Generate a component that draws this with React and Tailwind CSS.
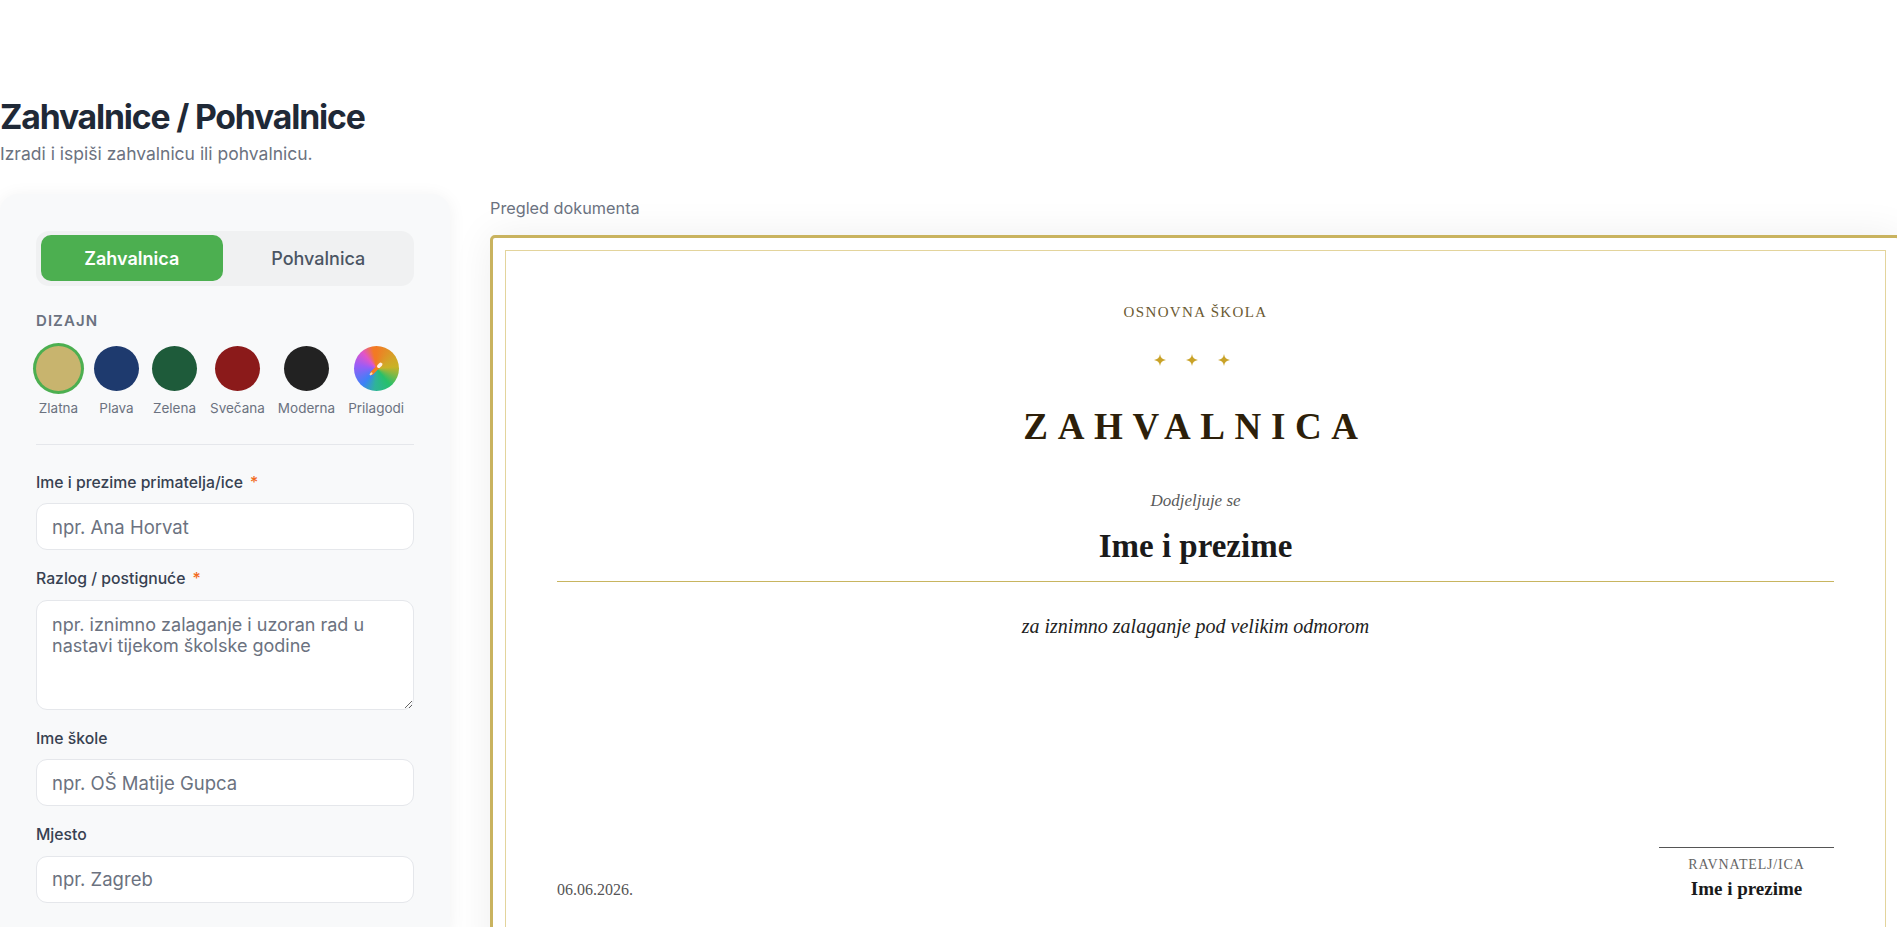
import React, { useState } from "react";

const designs = [
  { id: "zlatna", label: "Zlatna", color: "bg-[#c8b46e]" },
  { id: "plava", label: "Plava", color: "bg-[#1e3a6e]" },
  { id: "zelena", label: "Zelena", color: "bg-[#1e5b3a]" },
  { id: "svecana", label: "Svečana", color: "bg-[#8b1a1a]" },
  { id: "moderna", label: "Moderna", color: "bg-[#222222]" },
];

const Star = () => (
  <svg width="12" height="12" viewBox="0 0 12 12" className="text-[#c9a227]">
    <path
      d="M6 0 C6.5 3.6 8.4 5.5 12 6 C8.4 6.5 6.5 8.4 6 12 C5.5 8.4 3.6 6.5 0 6 C3.6 5.5 5.5 3.6 6 0 Z"
      fill="currentColor"
    />
  </svg>
);

const Field = ({ label, required, children }) => (
  <div>
    <label className="mb-[9px] block text-[15.75px] font-medium leading-[22.5px] text-[#374151]">
      {label}
      {required && <span className="ml-[7px] text-[#f26b1d]">*</span>}
    </label>
    {children}
  </div>
);

const inputCls =
  "block h-[47px] w-full rounded-[11px] border border-[#e5e7eb] bg-white px-[15px] text-[18.5px] leading-[27px] text-[#111827] placeholder:text-[#6b7280] outline-none";

const App = () => {
  const [type, setType] = useState("zahvalnica");
  const [design, setDesign] = useState("zlatna");
  const [name, setName] = useState("");
  const [reason, setReason] = useState("");

  return (
    <div className="h-screen w-full overflow-hidden bg-white font-['Inter',sans-serif]">
      <div className="pt-[97px]">
        <h1 className="text-[33.75px] font-bold leading-[40.5px] tracking-[-0.035em] text-[#1f2937]">
          Zahvalnice / Pohvalnice
        </h1>
        <p className="mt-[4px] text-[17.5px] leading-[24px] text-[#6b7280]">
          Izradi i ispiši zahvalnicu ili pohvalnicu.
        </p>

        <div className="mt-[28px] flex items-start gap-[40px]">
          {/* Form panel */}
          <aside className="w-[450px] shrink-0 rounded-[18px] bg-[#f8f9fa] px-[36px] pt-[37px] pb-[36px] shadow-[0_2px_18px_rgba(0,0,0,0.06)]">
            <div className="flex gap-[4px] rounded-[13px] bg-[#f0f1f2] p-[4.5px]">
              <button
                onClick={() => setType("zahvalnica")}
                className={`h-[46px] flex-1 rounded-[10px] text-[18px] font-semibold ${
                  type === "zahvalnica" ? "bg-[#4caf50] text-white" : "text-[#4b5563]"
                }`}
              >
                Zahvalnica
              </button>
              <button
                onClick={() => setType("pohvalnica")}
                className={`h-[46px] flex-1 rounded-[10px] text-[18px] font-medium ${
                  type === "pohvalnica" ? "bg-[#4caf50] text-white" : "text-[#4b5563]"
                }`}
              >
                Pohvalnica
              </button>
            </div>

            <div className="mt-[24px] text-[15px] font-semibold uppercase leading-[22.5px] tracking-[0.07em] text-[#6b7280]">
              Dizajn
            </div>
            <div className="mt-[13.5px] flex gap-[13px] border-b border-[#e5e7eb] pb-[27px]">
              {designs.map((d) => (
                <button key={d.id} onClick={() => setDesign(d.id)} className="flex flex-col items-center gap-[8px]">
                  <span
                    className={`block h-[45px] w-[45px] rounded-full ${d.color} ${
                      design === d.id ? "ring-[3px] ring-[#4caf50]" : ""
                    }`}
                  />
                  <span className="text-[13.5px] leading-[18px] text-[#6b7280]">{d.label}</span>
                </button>
              ))}
              <button onClick={() => setDesign("custom")} className="flex flex-col items-center gap-[8px]">
                <span className="flex h-[45px] w-[45px] items-center justify-center rounded-full bg-[conic-gradient(from_0deg,#f27a24,#d2a628_60deg,#c9b226_85deg,#27c06a_140deg,#2fb39a_185deg,#3b82f6_220deg,#9b5cf6_280deg,#e255c8_320deg,#f27a24_350deg)]">
                  <svg width="16" height="16" viewBox="0 0 16 16" className="mt-[2px]">
                    <path d="M12.5 3.5 L4 12" stroke="#f57c1f" strokeWidth="3.6" strokeLinecap="round" />
                    <path d="M12.6 3.4 L10.8 5.2" stroke="#fff3e6" strokeWidth="3.6" strokeLinecap="round" />
                    <path d="M3.6 12.4 L2.6 13.4" stroke="#ffd9b0" strokeWidth="2" strokeLinecap="round" />
                  </svg>
                </span>
                <span className="text-[13.5px] leading-[18px] text-[#6b7280]">Prilagodi</span>
              </button>
            </div>

            <div className="flex flex-col gap-[18px] pt-[27px]">
              <Field label="Ime i prezime primatelja/ice" required>
                <input
                  className={inputCls}
                  placeholder="npr. Ana Horvat"
                  value={name}
                  onChange={(e) => setName(e.target.value)}
                />
              </Field>
              <Field label="Razlog / postignuće" required>
                <textarea
                  className="block h-[110px] w-full rounded-[11px] border border-[#e5e7eb] bg-white px-[15px] py-[13px] text-[18px] leading-[21px] text-[#111827] placeholder:text-[#6b7280] outline-none"
                  placeholder="npr. iznimno zalaganje i uzoran rad u nastavi tijekom školske godine"
                  value={reason}
                  onChange={(e) => setReason(e.target.value)}
                />
              </Field>
              <Field label="Ime škole">
                <input className={inputCls} placeholder="npr. OŠ Matije Gupca" />
              </Field>
              <Field label="Mjesto">
                <input className={inputCls} placeholder="npr. Zagreb" />
              </Field>
            </div>
          </aside>

          {/* Preview */}
          <section className="shrink-0 pt-[3px]">
            <p className="mb-[16px] text-[16.25px] leading-[22.5px] text-[#6b7280]">Pregled dokumenta</p>
            <div className="h-[734px] w-[1411px] rounded-[5px] border-[3px] border-[#c9b35f] bg-white p-[12px] shadow-[0_0_40px_rgba(0,0,0,0.07)]">
              <div className="flex h-full flex-col items-center border border-[#e3d49c] px-[51px] pt-[51px] pb-[51px] font-['Liberation_Serif',serif]">
                <div className="text-[15px] leading-[20px] tracking-[0.09em] text-[#6b5a32]">OSNOVNA ŠKOLA</div>
                <div className="mt-[32px] mr-[8px] flex h-[12px] gap-[20px]">
                  <Star />
                  <Star />
                  <Star />
                </div>
                <h2 className="mt-[39px] text-[37px] font-bold leading-[44.4px] tracking-[0.26em] text-[#2d1f0a]">
                  {type === "zahvalnica" ? "ZAHVALNICA" : "POHVALNICA"}
                </h2>
                <div className="mt-[40px] text-[17px] italic leading-[24px] text-[#5a5a5a]">Dodjeljuje se</div>
                <div className="mt-[13px] text-[33px] font-bold leading-[40px] text-[#1a1a1a]">
                  {name || "Ime i prezime"}
                </div>
                <div className="mt-[15px] h-px w-full bg-[#c8b560]" />
                <div className="mt-[30px] text-[20px] italic leading-[28px] text-[#222222]">
                  {reason || "za iznimno zalaganje pod velikim odmorom"}
                </div>

                <div className="mt-auto flex w-full items-end justify-between">
                  <div className="text-[16px] leading-[24px] text-[#555555]">06.06.2026.</div>
                  <div className="w-[175px] border-t border-[#555555] pt-[7px] text-center">
                    <div className="text-[14px] leading-[20px] tracking-[0.06em] text-[#666666]">RAVNATELJ/ICA</div>
                    <div className="mt-[1px] text-[19px] font-bold leading-[26px] text-[#1a1a1a]">Ime i prezime</div>
                  </div>
                </div>
              </div>
            </div>
          </section>
        </div>
      </div>
    </div>
  );
};

export default App;
